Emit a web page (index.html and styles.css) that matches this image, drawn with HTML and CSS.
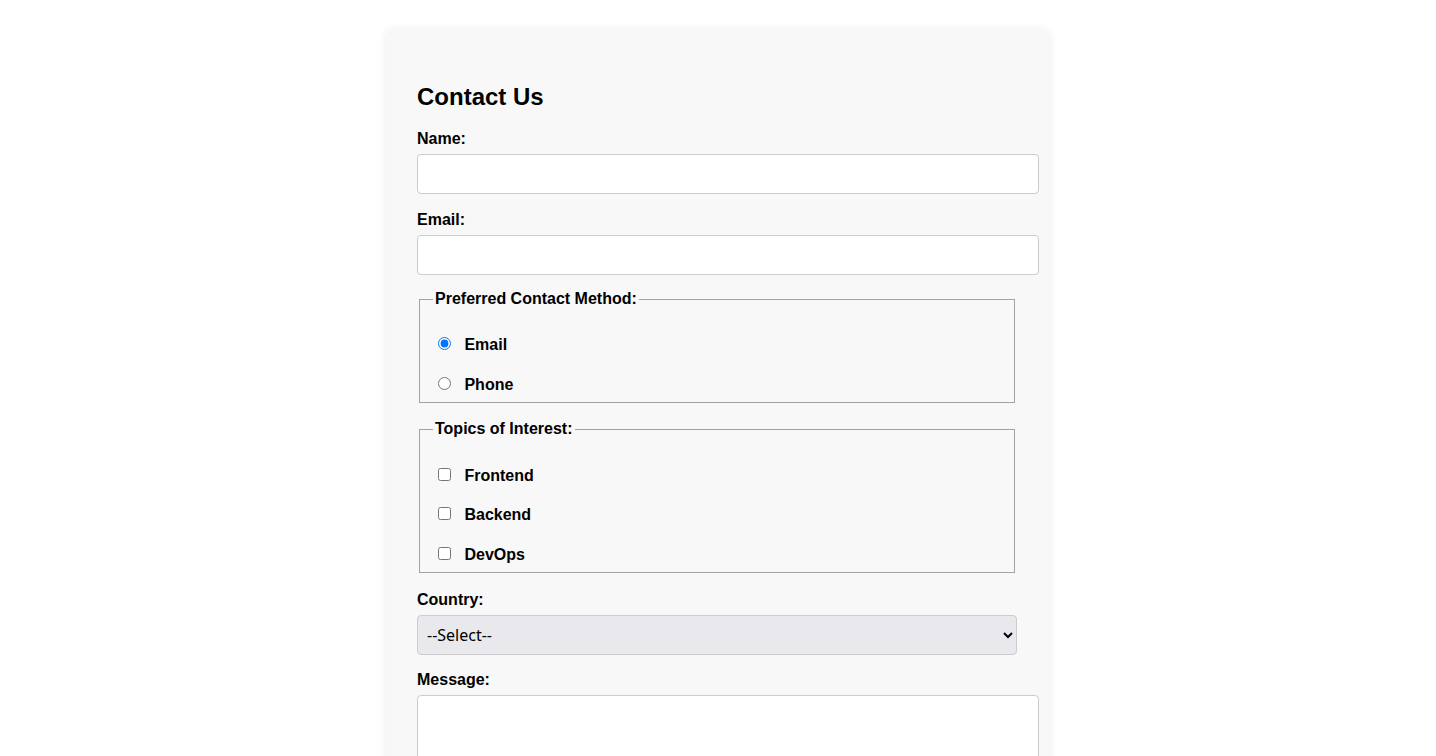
FILE: index.html
```html
<!DOCTYPE html>
<html lang="en">
<head>
<meta charset="utf-8">
<title>Contact Us</title>
<link rel="stylesheet" href="styles.css">
</head>
<body>
<div class="card">
  <h2 class="title">Contact Us</h2>
  <form class="form">
    <label class="field-label" for="name">Name:</label>
    <input class="text-input" type="text" id="name">

    <label class="field-label" for="email">Email:</label>
    <input class="text-input" type="email" id="email">

    <fieldset class="group">
      <legend class="group-legend">Preferred Contact Method:</legend>
      <label class="option"><input class="choice" type="radio" name="method" checked> Email</label>
      <label class="option"><input class="choice" type="radio" name="method"> Phone</label>
    </fieldset>

    <fieldset class="group">
      <legend class="group-legend">Topics of Interest:</legend>
      <label class="option"><input class="choice" type="checkbox"> Frontend</label>
      <label class="option"><input class="choice" type="checkbox"> Backend</label>
      <label class="option"><input class="choice" type="checkbox"> DevOps</label>
    </fieldset>

    <label class="field-label" for="country">Country:</label>
    <select class="select" id="country">
      <option>--Select--</option>
      <option>USA</option>
      <option>Canada</option>
      <option>UK</option>
    </select>

    <label class="field-label" for="message">Message:</label>
    <textarea class="textarea" id="message" rows="5"></textarea>
  </form>
</div>
</body>
</html>
```

FILE: styles.css
```css
body {
  margin: 0;
  background: #ffffff;
  font-family: "Liberation Sans", Arial, sans-serif;
  font-size: 16px;
  color: #000;
}

.card {
  max-width: 600px;
  margin: 30px auto 40px;
  padding: 32px 33px 32px 31px;
  background: #f8f8f8;
  border-radius: 8px;
  box-shadow: 0 0 10px rgba(0, 0, 0, 0.08);
}

.title {
  font-size: 24px;
  font-weight: bold;
  margin: 21px 0 19px;
}

.field-label {
  display: block;
  font-weight: bold;
  margin-bottom: 6px;
}

.text-input,
.textarea {
  display: block;
  width: 100%;
  padding: 10px;
  margin: 0 0 16.5px;
  border: 1px solid #ccc;
  border-radius: 4px;
  background: #fff;
  font-family: "Liberation Sans", Arial, sans-serif;
  font-size: 16px;
}

.textarea {
  height: 100px;
  resize: vertical;
}

.group {
  margin: -1px 2px 18px;
  padding: 5.6px 13px 8.5px;
  border: 1px solid #a3a3a3;
}

.group-legend {
  font-weight: bold;
  padding: 0 2px;
}

.option {
  display: block;
  font-weight: bold;
  margin-top: 19.4px;
}

.option:first-of-type {
  margin-top: 20.9px;
}

.choice {
  margin: 3px 9px 0 5px;
}

.select {
  display: block;
  width: 100%;
  height: 40px;
  padding: 0 5px;
  margin: 0 0 16px;
  border: 1px solid #ccc;
  border-radius: 4px;
  background-color: #e9e9ed;
  font-family: "Noto Sans", "Liberation Sans", sans-serif;
  font-size: 16px;
  color: #000;
}
```
